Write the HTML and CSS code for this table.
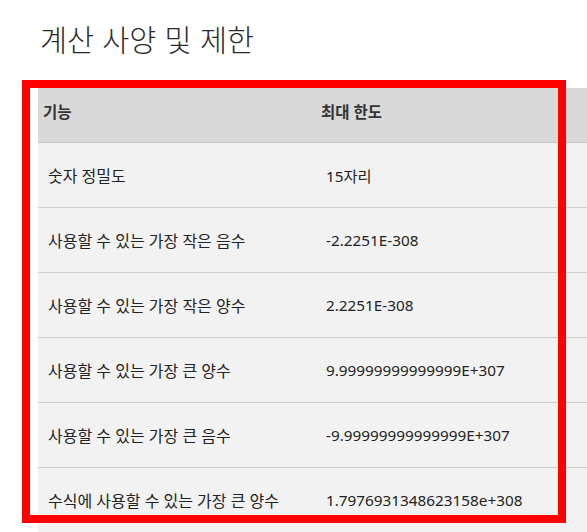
FILE: index.html
```html
<!DOCTYPE html>
<html lang="ko">
<head>
<meta charset="utf-8">
<link rel="stylesheet" href="styles.css">
</head>
<body>
<h1 class="title">계산 사양 및 제한</h1>
<div class="wrap">
  <table class="spec">
    <thead>
      <tr><th>기능</th><th>최대 한도</th></tr>
    </thead>
    <tbody>
      <tr><td>숫자 정밀도</td><td>15자리</td></tr>
      <tr><td>사용할 수 있는 가장 작은 음수</td><td>-2.2251E-308</td></tr>
      <tr><td>사용할 수 있는 가장 작은 양수</td><td>2.2251E-308</td></tr>
      <tr><td>사용할 수 있는 가장 큰 양수</td><td>9.99999999999999E+307</td></tr>
      <tr><td>사용할 수 있는 가장 큰 음수</td><td>-9.99999999999999E+307</td></tr>
      <tr><td>수식에 사용할 수 있는 가장 큰 양수</td><td>1.7976931348623158e+308</td></tr>
    </tbody>
  </table>
  <div class="highlight"></div>
</div>
</body>
</html>
```
FILE: styles.css
```css
html, body {
  margin: 0;
  padding: 0;
  overflow: hidden;
  background: #fff;
}
body {
  font-family: "Noto Sans", "Noto Sans CJK KR", sans-serif;
  color: #222;
}
.title {
  margin: 0 0 29px 0;
  padding: 17px 0 0 40px;
  font-family: "Noto Sans CJK KR", sans-serif;
  font-weight: 300;
  font-size: 29.4px;
  line-height: 42px;
  color: #2a2a2a;
  white-space: nowrap;
}
.wrap {
  position: relative;
  padding-left: 38px;
}
.spec {
  border-collapse: collapse;
  width: 549px;
  table-layout: fixed;
  font-size: 16px;
}
.spec th:first-child, .spec td:first-child {
  width: 268px;
}
.spec th {
  background: #d9d9d9;
  height: 46px;
  padding: 0 5px 8px 5px;
  text-align: left;
  font-weight: 700;
  font-size: 15.5px;
  color: #333;
  border-bottom: 1px solid #c8c8c8;
}
.spec td {
  background: #f2f2f2;
  height: 64px;
  padding: 0 10px;
  border-bottom: 1px solid #cfcfcf;
  white-space: nowrap;
}
.spec td:last-child {
  font-size: 15.3px;
}
.highlight {
  position: absolute;
  left: 22px;
  top: -8px;
  width: 528px;
  height: 427px;
  border: 8px solid #ff0000;
  pointer-events: none;
}
```
